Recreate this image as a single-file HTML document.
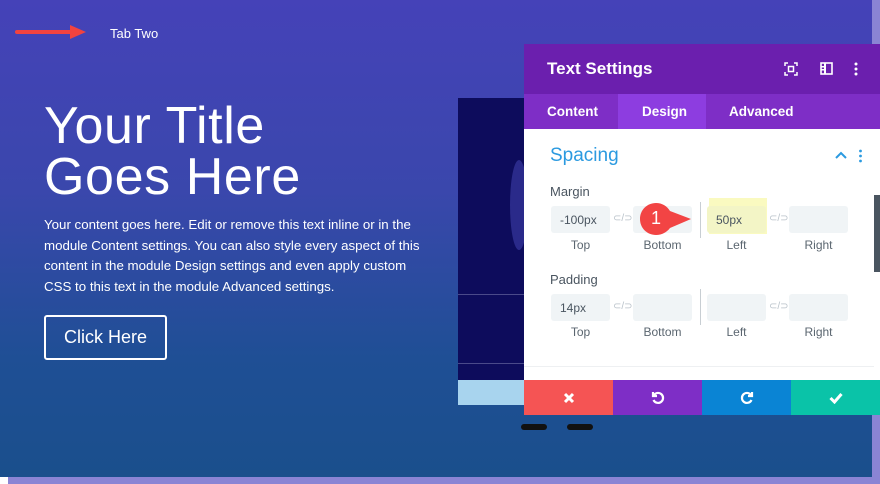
<!DOCTYPE html>
<html><head><meta charset="utf-8"><style>
*{margin:0;padding:0;box-sizing:border-box}
body{width:880px;height:484px;position:relative;overflow:hidden;background:#fff;font-family:"Liberation Sans",sans-serif}
.bg{position:absolute;left:0;top:0;width:872px;height:477px;background:linear-gradient(180deg,#4542b8 0%,#3a47ac 40%,#1f4f95 75%,#1a4f8c 100%)}
.strip-b{position:absolute;left:8px;top:477px;width:872px;height:7px;background:#8a84d4}
.strip-r{position:absolute;left:872px;top:0;width:8px;height:477px;background:#8a84d4}
.abs{position:absolute}
.w{color:#fff}
.inp{position:absolute;width:59px;height:27px;background:#f0f4f6;border-radius:3px;font-size:12px;color:#4a5560;padding:7px 0 0 9px}
.lbl{position:absolute;font-size:12px;color:#5b6670;width:59px;text-align:center}
.lk{position:absolute;font-size:10px;color:#b9c2ca}
.btn{position:absolute;top:380px;height:35px;width:89px;display:flex;align-items:center;justify-content:center}
</style></head><body>
<div class="bg"></div>
<div class="strip-r"></div>
<div class="strip-b"></div>
<svg class="abs" style="left:14px;top:24px" width="74" height="18"><line x1="3" y1="8" x2="58" y2="8" stroke="#f2433f" stroke-width="4" stroke-linecap="round"/><polygon points="56,1 72,8 56,15" fill="#f2433f"/></svg>
<div class="abs w" style="left:110px;top:26px;font-size:13px">Tab Two</div>
<div class="abs w" style="left:44px;top:101px;font-size:52px;line-height:51px;letter-spacing:0.6px">Your Title<br>Goes Here</div>
<div class="abs w" style="left:44px;top:215px;font-size:13.3px;line-height:20.6px;width:390px">Your content goes here. Edit or remove this text inline or in the module Content settings. You can also style every aspect of this content in the module Design settings and even apply custom CSS to this text in the module Advanced settings.</div>
<div class="abs w" style="left:44px;top:315px;width:123px;height:45px;border:2px solid #fff;border-radius:3px;font-size:18px;text-align:center;line-height:41px">Click Here</div>
<div class="abs" style="left:458px;top:98px;width:66px;height:282px;background:#0d0c5c"></div>
<div class="abs" style="left:458px;top:294px;width:66px;height:1px;background:#4a4a8a"></div>
<div class="abs" style="left:458px;top:363px;width:66px;height:1px;background:#4a4a8a"></div>
<div class="abs" style="left:510px;top:160px;width:18px;height:90px;background:#2a2a8a;border-radius:50%"></div>
<div class="abs" style="left:458px;top:380px;width:66px;height:25px;background:#a8d4ee"></div>
<div class="abs" style="left:521px;top:424px;width:26px;height:6px;background:#111;border-radius:3px"></div>
<div class="abs" style="left:567px;top:424px;width:26px;height:6px;background:#111;border-radius:3px"></div>
<div class="abs" style="left:524px;top:44px;width:356px;height:50px;background:#6b1fae"></div>
<div class="abs w" style="left:547px;top:59px;font-size:17px;font-weight:bold">Text Settings</div>
<svg class="abs" style="left:784px;top:62px" width="14" height="14" fill="none" stroke="#fff" stroke-width="1.5"><path d="M1 4V1h3M10 1h3v3M13 10v3h-3M4 13H1v-3"/><rect x="4.5" y="4.5" width="5" height="5"/></svg>
<svg class="abs" style="left:820px;top:62px" width="13" height="13"><rect x="1" y="1" width="11" height="11" fill="none" stroke="#fff" stroke-width="1.6"/><rect x="4" y="1" width="2" height="11" fill="#fff"/><rect x="1" y="4" width="3" height="1.5" fill="#fff"/><rect x="1" y="7" width="3" height="1.5" fill="#fff"/></svg>
<svg class="abs" style="left:853px;top:62px" width="6" height="14" fill="#fff"><circle cx="3" cy="2" r="1.5"/><circle cx="3" cy="7" r="1.5"/><circle cx="3" cy="12" r="1.5"/></svg>
<div class="abs" style="left:524px;top:94px;width:356px;height:35px;background:#7e2ec6"></div>
<div class="abs" style="left:618px;top:94px;width:88px;height:35px;background:#8d3de0"></div>
<div class="abs w" style="left:547px;top:104px;font-size:13.5px;font-weight:bold">Content</div>
<div class="abs w" style="left:642px;top:104px;font-size:13.5px;font-weight:bold">Design</div>
<div class="abs w" style="left:729px;top:104px;font-size:13.5px;font-weight:bold">Advanced</div>
<div class="abs" style="left:524px;top:129px;width:356px;height:251px;background:#fff"></div>
<div class="abs" style="left:550px;top:145px;font-size:19px;color:#2b9ae0">Spacing</div>
<svg class="abs" style="left:835px;top:151px" width="12" height="8"><path d="M1 7L6 2L11 7" fill="none" stroke="#2b9ae0" stroke-width="2"/></svg>
<svg class="abs" style="left:858px;top:149px" width="5" height="14" fill="#2b9ae0"><circle cx="2.5" cy="2" r="1.4"/><circle cx="2.5" cy="7" r="1.4"/><circle cx="2.5" cy="12" r="1.4"/></svg>
<div class="abs" style="left:874px;top:195px;width:6px;height:77px;background:#4a5560"></div>
<div class="abs" style="left:550px;top:184px;font-size:13px;color:#4a5560">Margin</div>
<div class="inp" style="left:551px;top:206px">-100px</div>
<div class="lk" style="left:613px;top:213px">&#x2282;/&#x2283;</div>
<div class="inp" style="left:633px;top:206px"></div>
<div class="abs" style="left:700px;top:202px;width:1px;height:36px;background:#c8ced3"></div>
<div class="abs" style="left:709px;top:198px;width:58px;height:36px;background:#fafac0"></div>
<div class="inp" style="left:707px;top:206px;background:#f3f5c6">50px</div>
<div class="lk" style="left:769px;top:213px">&#x2282;/&#x2283;</div>
<div class="inp" style="left:789px;top:206px"></div>
<div class="lbl" style="left:551px;top:238px">Top</div>
<div class="lbl" style="left:633px;top:238px">Bottom</div>
<div class="lbl" style="left:707px;top:238px">Left</div>
<div class="lbl" style="left:789px;top:238px">Right</div>
<svg class="abs" style="left:639px;top:202px" width="56" height="34"><path d="M17 1C8 1 1 8 1 17s7 16 16 16c6 0 11-3 14-7l21-9-21-8C28 4 23 1 17 1z" fill="#f24444"/></svg>
<div class="abs w" style="left:651px;top:208px;font-size:18px">1</div>
<div class="abs" style="left:550px;top:272px;font-size:13px;color:#4a5560">Padding</div>
<div class="inp" style="left:551px;top:294px">14px</div>
<div class="lk" style="left:613px;top:301px">&#x2282;/&#x2283;</div>
<div class="inp" style="left:633px;top:294px"></div>
<div class="abs" style="left:700px;top:289px;width:1px;height:36px;background:#c8ced3"></div>
<div class="inp" style="left:707px;top:294px"></div>
<div class="lk" style="left:769px;top:301px">&#x2282;/&#x2283;</div>
<div class="inp" style="left:789px;top:294px"></div>
<div class="lbl" style="left:551px;top:325px">Top</div>
<div class="lbl" style="left:633px;top:325px">Bottom</div>
<div class="lbl" style="left:707px;top:325px">Left</div>
<div class="lbl" style="left:789px;top:325px">Right</div>
<div class="abs" style="left:524px;top:366px;width:350px;height:1px;background:#eef0f2"></div>
<div class="btn" style="left:524px;background:#f55454"><svg width="12" height="12"><path d="M2 2L10 10M10 2L2 10" stroke="#fff" stroke-width="3"/></svg></div>
<div class="btn" style="left:613px;background:#7e2ec6"><svg width="14" height="14" fill="none" stroke="#fff" stroke-width="2.2"><path d="M3 4A5 5 0 1 1 2.5 9"/><path d="M2 1v4h4"/></svg></div>
<div class="btn" style="left:702px;background:#0a84d4"><svg width="14" height="14" fill="none" stroke="#fff" stroke-width="2.2"><path d="M11 4A5 5 0 1 0 11.5 9"/><path d="M12 1v4H8"/></svg></div>
<div class="btn" style="left:791px;width:89px;background:#0ac3a8"><svg width="14" height="12"><path d="M1.5 6L5.5 10L12.5 2" fill="none" stroke="#fff" stroke-width="3"/></svg></div>
</body></html>
